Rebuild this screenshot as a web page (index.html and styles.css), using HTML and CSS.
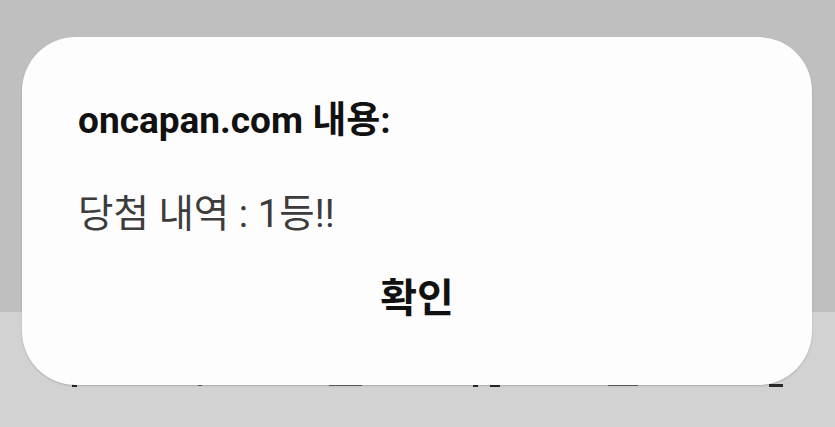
FILE: index.html
```html
<!DOCTYPE html>
<html lang="ko">
<head>
<meta charset="utf-8">
<link rel="stylesheet" href="styles.css">
</head>
<body>
<div class="page">
  <div class="page-top"></div>
  <div class="page-bottom">
    <div class="peek">
      <span class="m m1"></span>
      <span class="m m2"></span>
      <span class="m m3"></span>
      <span class="m m4"></span>
      <span class="m m5"></span>
      <span class="m m6"></span>
      <span class="m m7"></span>
    </div>
  </div>
</div>
<div class="dialog">
  <div class="title">oncapan.com 내용:</div>
  <div class="message">당첨 내역 : 1등!!</div>
  <div class="actions"><span class="ok">확인</span></div>
</div>
</body>
</html>
```

FILE: styles.css
```css
html, body {
  margin: 0;
  padding: 0;
}
body {
  width: 835px;
  height: 427px;
  overflow: hidden;
  position: relative;
  font-family: Roboto, "Noto Sans CJK KR", sans-serif;
}
.page {
  display: flex;
  flex-direction: column;
  height: 427px;
}
.page-top {
  height: 312px;
  background: #bfbfbf;
}
.page-bottom {
  flex: 1;
  background: #d2d2d2;
}
.peek {
  display: flex;
  align-items: flex-start;
  padding-top: 72px;
  height: 6px;
}
.m {
  display: block;
  background: #2a2a2a;
  height: 3px;
}
.m1 { margin-left: 72px; width: 5px; }
.m2 { margin-left: 121px; width: 4px; height: 2px; background: #666; }
.m3 { margin-left: 127px; width: 33px; height: 2px; background: #666; }
.m4 { margin-left: 111px; width: 5px; }
.m5 { margin-left: 12px; width: 10px; }
.m6 { margin-left: 108px; width: 30px; height: 2px; background: #666; }
.m7 { margin-left: 131px; width: 14px; }
.dialog {
  position: absolute;
  left: 22px;
  top: 37px;
  width: 790px;
  height: 348px;
  box-sizing: border-box;
  background: #fdfdfd;
  border-radius: 54px;
  box-shadow: 0 1px 2px rgba(0, 0, 0, 0.18);
  padding: 62px 56px 0 56px;
  display: flex;
  flex-direction: column;
}
.title {
  font-size: 37px;
  font-weight: 700;
  color: #111;
  line-height: 44px;
}
.message {
  margin-top: 48px;
  font-size: 38.5px;
  font-weight: 400;
  color: #3c3c3c;
  line-height: 46px;
}
.actions {
  margin-top: 34px;
  display: flex;
  justify-content: center;
}
.ok {
  font-size: 40px;
  font-weight: 700;
  color: #111;
  line-height: 48px;
  font-family: "Noto Sans CJK KR", sans-serif;
}
```
